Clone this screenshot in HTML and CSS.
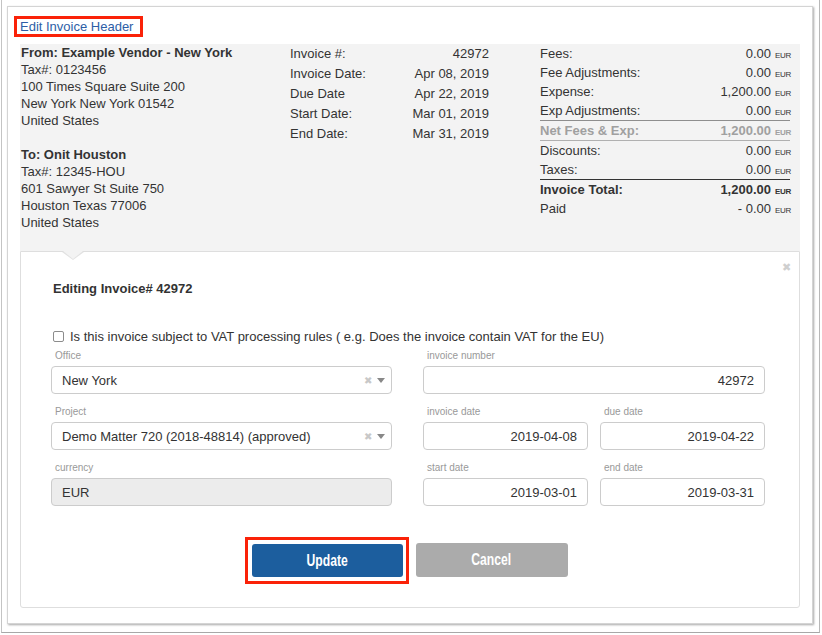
FILE: index.html
```html
<!DOCTYPE html>
<html>
<head>
<meta charset="utf-8">
<title>Edit Invoice Header</title>
<link rel="stylesheet" href="styles.css">
</head>
<body>
<div class="window">
  <div class="panel">
    <div class="link-row"><a class="edit-link" href="#">Edit Invoice Header</a></div>
    <div class="summary">
      <div class="col-address">
        <div class="strong">From: Example Vendor - New York</div>
        <div>Tax#: 0123456</div>
        <div>100 Times Square Suite 200</div>
        <div>New York New York 01542</div>
        <div>United States</div>
        <div class="spacer"></div>
        <div class="strong">To: Onit Houston</div>
        <div>Tax#: 12345-HOU</div>
        <div>601 Sawyer St Suite 750</div>
        <div>Houston Texas 77006</div>
        <div>United States</div>
      </div>
      <div class="col-dates">
        <div class="kv"><span>Invoice #:</span><span>42972</span></div>
        <div class="kv"><span>Invoice Date:</span><span>Apr 08, 2019</span></div>
        <div class="kv"><span>Due Date</span><span>Apr 22, 2019</span></div>
        <div class="kv"><span>Start Date:</span><span>Mar 01, 2019</span></div>
        <div class="kv"><span>End Date:</span><span>Mar 31, 2019</span></div>
      </div>
      <div class="col-totals">
        <div class="tr"><span>Fees:</span><span>0.00<small>EUR</small></span></div>
        <div class="tr"><span>Fee Adjustments:</span><span>0.00<small>EUR</small></span></div>
        <div class="tr"><span>Expense:</span><span>1,200.00<small>EUR</small></span></div>
        <div class="tr line-mid"><span>Exp Adjustments:</span><span>0.00<small>EUR</small></span></div>
        <div class="tr net line-light"><span>Net Fees &amp; Exp:</span><span>1,200.00<small>EUR</small></span></div>
        <div class="tr"><span>Discounts:</span><span>0.00<small>EUR</small></span></div>
        <div class="tr line-dark"><span>Taxes:</span><span>0.00<small>EUR</small></span></div>
        <div class="tr total"><span>Invoice Total:</span><span>1,200.00<small>EUR</small></span></div>
        <div class="tr"><span>Paid</span><span>- 0.00<small>EUR</small></span></div>
      </div>
    </div>
    <div class="editor">
      <span class="close">&#x2716;</span>
      <div class="editor-title">Editing Invoice# 42972</div>
      <label class="vat"><span class="check"></span>Is this invoice subject to VAT processing rules ( e.g. Does the invoice contain VAT for the EU)</label>
      <div class="fields">
        <div class="col-left">
          <div class="field">
            <div class="lbl">Office</div>
            <div class="select"><span class="val">New York</span><span class="clear">&#x2716;</span><span class="caret"></span></div>
          </div>
          <div class="field">
            <div class="lbl">Project</div>
            <div class="select"><span class="val">Demo Matter 720 (2018-48814) (approved)</span><span class="clear">&#x2716;</span><span class="caret"></span></div>
          </div>
          <div class="field">
            <div class="lbl">currency</div>
            <div class="input disabled left">EUR</div>
          </div>
        </div>
        <div class="col-right">
          <div class="field">
            <div class="lbl">invoice number</div>
            <div class="input">42972</div>
          </div>
          <div class="pair">
            <div class="field">
              <div class="lbl">invoice date</div>
              <div class="input">2019-04-08</div>
            </div>
            <div class="field">
              <div class="lbl">due date</div>
              <div class="input">2019-04-22</div>
            </div>
          </div>
          <div class="pair">
            <div class="field">
              <div class="lbl">start date</div>
              <div class="input">2019-03-01</div>
            </div>
            <div class="field">
              <div class="lbl">end date</div>
              <div class="input">2019-03-31</div>
            </div>
          </div>
        </div>
      </div>
      <div class="actions">
        <button class="btn btn-update"><span class="btn-text">Update</span></button>
        <button class="btn btn-cancel"><span class="btn-text">Cancel</span></button>
      </div>
    </div>
  </div>
</div>
</body>
</html>
```

FILE: styles.css
```css
* { box-sizing: border-box; }
html, body { margin: 0; padding: 0; background: #fff; }
body {
  font-family: "Liberation Sans", Arial, Helvetica, sans-serif;
  font-size: 13px;
  color: #333;
}
.window {
  margin-left: 1px;
  width: 819px;
  height: 633px;
  border-left: 1px solid #c4c4c4;
  border-right: 1px solid #b8b8b8;
  border-bottom: 1px solid #a8a8a8;
  padding: 6px 0 0 5px;
}
.panel {
  width: 806px;
  height: 618px;
  background: #fff;
  border: 1px solid #d4d4d4;
  box-shadow: 1px 1px 2px rgba(0,0,0,0.35);
  padding: 11px 12px 0 12px;
}
.link-row { height: 17px; line-height: 17px; margin-bottom: 9px; }
.edit-link {
  position: relative;
  color: #2d5ea6;
  text-decoration: none;
}
.edit-link::after {
  content: "";
  position: absolute;
  left: -6px; right: -10px; top: -3px; bottom: -3px;
  border: 3px solid #fa2208;
}
.summary {
  background: #f3f3f3;
  display: grid;
  grid-template-columns: 269px 199px 301px;
  padding: 0 0 20px 1px;
  height: 207px;
}
.col-address { line-height: 17px; }
.col-address .strong { font-weight: bold; }
.spacer { height: 17px; }
.col-dates { line-height: 20px; }
.kv { display: flex; justify-content: space-between; }
.col-totals { padding-left: 51px; }
.tr {
  display: flex;
  justify-content: space-between;
  align-items: center;
  height: 19px;
  box-sizing: content-box;
  line-height: 19px;
}
.tr small {
  font-size: 8px;
  margin-left: 4px;
  letter-spacing: -0.3px;
  display: inline-block;
  width: 15px;
  line-height: 10px;
}
.line-mid { border-bottom: 1px solid #8e8e8e; }
.line-light { border-bottom: 1px solid #b0b0b0; }
.line-dark { border-bottom: 1px solid #333; }
.net { color: #a0a0a0; font-weight: bold; }
.total { font-weight: bold; }

.editor {
  position: relative;
  border: 1px solid #dedede;
  border-radius: 0 0 3px 3px;
  padding: 28px 33px 30px 30px;
  background: #fff;
}
.editor::before {
  content: "";
  position: absolute;
  left: 41px; top: 0;
  border-left: 11px solid transparent;
  border-right: 11px solid transparent;
  border-top: 8px solid #e2e2e2;
}
.editor::after {
  content: "";
  position: absolute;
  left: 42px; top: -1px;
  border-left: 10px solid transparent;
  border-right: 10px solid transparent;
  border-top: 8px solid #f3f3f3;
}
.close {
  position: absolute;
  right: 8px; top: 9px;
  font-size: 11px;
  color: #cfcfcf;
  line-height: 12px;
}
.editor-title {
  font-weight: bold;
  line-height: 17px;
  margin-left: 2px;
}
.vat {
  display: flex;
  align-items: center;
  line-height: 17px;
  margin: 31px 0 5px 2px;
}
.check {
  width: 11px; height: 11px;
  border: 1px solid #8c8c8c;
  border-radius: 2px;
  margin-right: 6px;
  background: #fff;
}
.fields {
  display: grid;
  grid-template-columns: 341px 342px;
  column-gap: 31px;
}
.pair {
  display: grid;
  grid-template-columns: 165px 165px;
  column-gap: 12px;
}
.field { margin-bottom: 12px; }
.lbl {
  font-size: 10px;
  color: #999;
  line-height: 11px;
  margin: 0 0 5px 4px;
}
.select, .input {
  height: 28px;
  border: 1px solid #ccc;
  border-radius: 4px;
  background: #fff;
  line-height: 27px;
  color: #333;
}
.select {
  display: flex;
  align-items: center;
  padding: 0 6px 0 10px;
}
.select .val { flex: 1; }
.select .clear {
  color: #c8c8c8;
  font-size: 10px;
  margin-right: 5px;
}
.caret {
  width: 0; height: 0;
  border-left: 4px solid transparent;
  border-right: 4px solid transparent;
  border-top: 5px solid #888;
}
.input {
  text-align: right;
  padding: 0 10px;
}
.input.left { text-align: left; }
.input.disabled { background: #ececec; }

.actions {
  display: flex;
  justify-content: center;
  gap: 13px;
  margin-top: 25px;
  padding-left: 2px;
}
.btn {
  width: 152px;
  height: 34px;
  border: none;
  border-radius: 3px;
  color: #fff;
  font-family: "Liberation Sans", sans-serif;
  font-weight: bold;
  font-size: 16px;
  padding: 0;
}
.btn-text {
  display: inline-block;
  transform: scaleX(0.76);
}
.btn-update {
  position: relative;
  background: #1c5e9e;
  width: 151px;
  height: 33px;
  margin-top: 1px;
}
.btn-update::after {
  content: "";
  position: absolute;
  left: -7px; right: -6px; top: -7px; bottom: -7px;
  border: 3px solid #fa2208;
}
.btn-cancel { background: #ababab; }
```
